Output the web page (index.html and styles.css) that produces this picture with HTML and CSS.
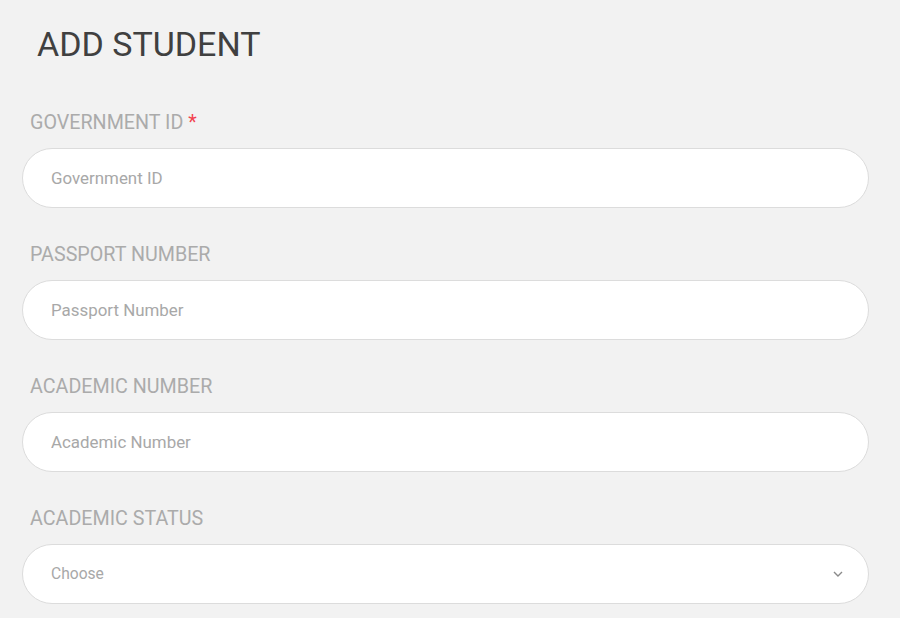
FILE: index.html
```html
<!DOCTYPE html>
<html lang="en">
<head>
    <meta charset="UTF-8">
    <meta name="viewport" content="width=device-width, initial-scale=1.0">
    <title>Add Student</title>
    <link rel="stylesheet" href="styles.css">
</head>
<body>
    <div class="page">
        <h1 class="page-title">ADD STUDENT</h1>
        <form class="student-form">
            <div class="field">
                <label class="field-label" for="govId">GOVERNMENT ID <span class="required">*</span></label>
                <input class="field-input" id="govId" type="text" placeholder="Government ID">
            </div>
            <div class="field">
                <label class="field-label" for="passport">PASSPORT NUMBER</label>
                <input class="field-input" id="passport" type="text" placeholder="Passport Number">
            </div>
            <div class="field">
                <label class="field-label" for="academic">ACADEMIC NUMBER</label>
                <input class="field-input" id="academic" type="text" placeholder="Academic Number">
            </div>
            <div class="field">
                <label class="field-label" for="status">ACADEMIC STATUS</label>
                <div class="select-wrap">
                    <select class="field-input field-select" id="status">
                        <option value="">Choose</option>
                    </select>
                    <svg class="select-arrow" width="10" height="6" viewBox="0 0 10 6">
                        <path d="M1 1 L5 5 L9 1" fill="none" stroke="#8a8a8a" stroke-width="1.4"/>
                    </svg>
                </div>
            </div>
        </form>
    </div>
</body>
</html>
```

FILE: styles.css
```css
* {
    margin: 0;
    padding: 0;
    box-sizing: border-box;
    font-family: Roboto, 'Liberation Sans', sans-serif;
}

body {
    background: #f2f2f2;
    min-height: 100vh;
    overflow: hidden;
}

.page {
    padding: 24px 31px 0 22px;
}

.page-title {
    font-size: 34px;
    line-height: 40px;
    font-weight: 400;
    color: #404040;
    padding-left: 15px;
    margin-bottom: 47px;
}

.field {
    display: flex;
    flex-direction: column;
    margin-bottom: 35px;
}

.field-label {
    font-size: 19.7px;
    line-height: 24px;
    font-weight: 400;
    color: #ababab;
    padding-left: 8px;
    margin-bottom: 13px;
}

.required {
    color: #f2434f;
}

.field-input {
    width: 100%;
    height: 60px;
    border: 1px solid #dcdcdc;
    border-radius: 30px;
    background: #fff;
    padding: 0 28px;
    font-size: 16.9px;
    color: #555;
    outline: none;
}

.field-input::placeholder {
    color: #a8a8a8;
}

.select-wrap {
    position: relative;
}

.field-select {
    appearance: none;
    -webkit-appearance: none;
    color: #a8a8a8;
    font-size: 15.6px;
}

.select-arrow {
    position: absolute;
    right: 26px;
    top: 27px;
    pointer-events: none;
}
```
